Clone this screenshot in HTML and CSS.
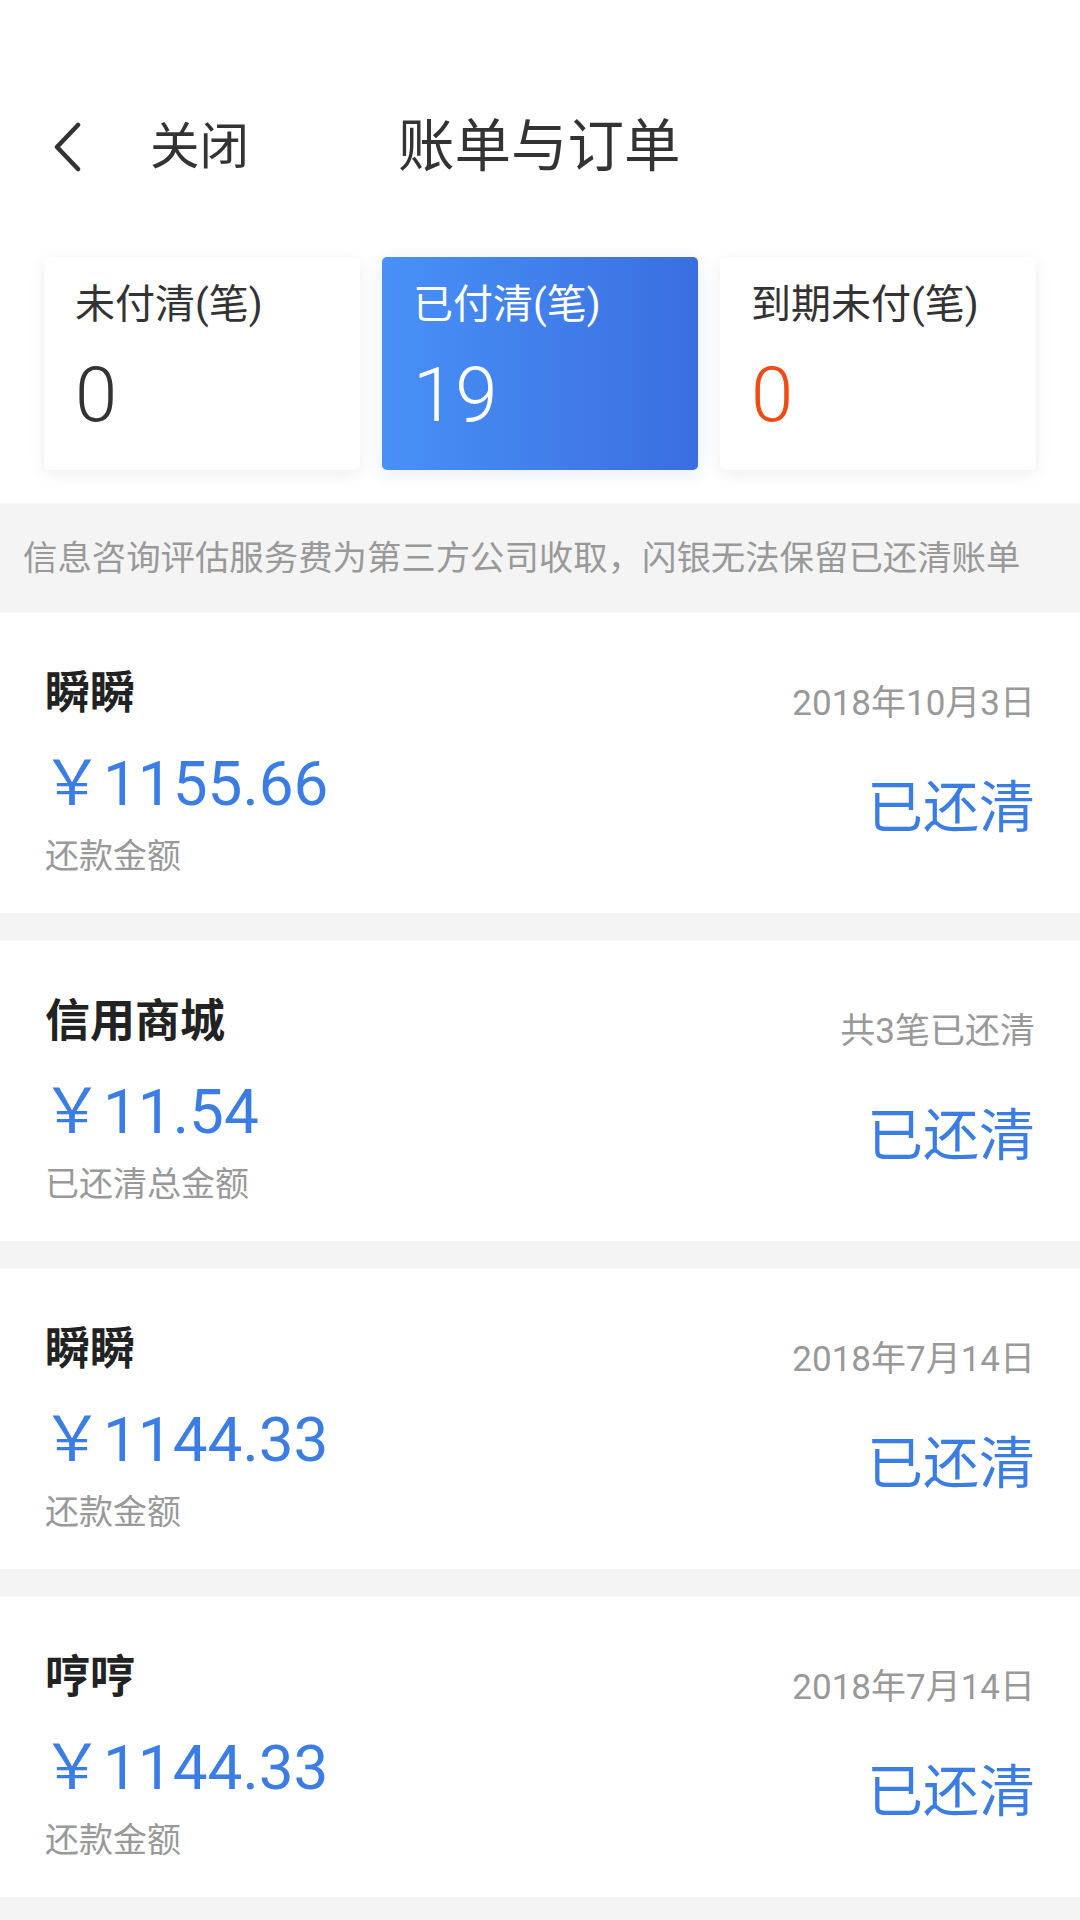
FILE: index.html
```html
<!DOCTYPE html>
<html lang="zh-CN">
<head>
<meta charset="UTF-8" />
<meta name="viewport" content="width=device-width, initial-scale=1" />
<title>账单与订单</title>
<link rel="stylesheet" href="styles.css">
</head>
<body>
<div class="top">
  <div class="nav">
    <svg class="back" width="28" height="50" viewBox="0 0 28 50">
      <polyline points="24,3 3,25 24,47" fill="none" stroke="#333" stroke-width="4.5" stroke-linecap="round" stroke-linejoin="round" />
    </svg>
    <span class="close">关闭</span>
    <span class="title">账单与订单</span>
  </div>

  <div class="stats">
    <div class="stat">
      <div class="stat-label">未付清(笔)</div>
      <div class="stat-num">0</div>
    </div>
    <div class="stat active">
      <div class="stat-label">已付清(笔)</div>
      <div class="stat-num">19</div>
    </div>
    <div class="stat">
      <div class="stat-label">到期未付(笔)</div>
      <div class="stat-num due">0</div>
    </div>
  </div>
</div>

<div class="notice">信息咨询评估服务费为第三方公司收取，闪银无法保留已还清账单</div>

<div class="bill">
  <div class="bill-left">
    <div class="bill-name">瞬瞬</div>
    <div class="bill-amount">￥1155.66</div>
    <div class="bill-sub">还款金额</div>
  </div>
  <div class="bill-right">
    <div class="bill-date">2018年10月3日</div>
    <div class="bill-status">已还清</div>
  </div>
</div>

<div class="bill">
  <div class="bill-left">
    <div class="bill-name">信用商城</div>
    <div class="bill-amount">￥11.54</div>
    <div class="bill-sub">已还清总金额</div>
  </div>
  <div class="bill-right">
    <div class="bill-date">共3笔已还清</div>
    <div class="bill-status">已还清</div>
  </div>
</div>

<div class="bill">
  <div class="bill-left">
    <div class="bill-name">瞬瞬</div>
    <div class="bill-amount">￥1144.33</div>
    <div class="bill-sub">还款金额</div>
  </div>
  <div class="bill-right">
    <div class="bill-date">2018年7月14日</div>
    <div class="bill-status">已还清</div>
  </div>
</div>

<div class="bill">
  <div class="bill-left">
    <div class="bill-name">哼哼</div>
    <div class="bill-amount">￥1144.33</div>
    <div class="bill-sub">还款金额</div>
  </div>
  <div class="bill-right">
    <div class="bill-date">2018年7月14日</div>
    <div class="bill-status">已还清</div>
  </div>
</div>
</body>
</html>
```

FILE: styles.css
```css
body {
  margin: 0;
  background: #f4f4f4;
  font-family: Roboto, "Noto Sans CJK SC", sans-serif;
  color: #333;
}
.top {
  background: #fff;
  padding: 97px 0 33px;
}
.nav {
  display: flex;
  align-items: center;
  height: 100px;
  padding-left: 54px;
}
.back {
  display: block;
}
.close {
  font-size: 49.5px;
  line-height: 60px;
  color: #333;
  margin-left: 68px;
}
.title {
  font-size: 56.5px;
  line-height: 64px;
  color: #333;
  margin-left: 149px;
}
.stats {
  display: flex;
  gap: 22px;
  padding: 0 44px;
  margin-top: 60px;
}
.stat {
  flex: 1;
  height: 213px;
  box-sizing: border-box;
  padding: 23px 0 0 31px;
  background: #fff;
  border-radius: 5px;
  box-shadow: 0 4px 18px rgba(0, 0, 0, 0.07);
}
.stat.active {
  background: linear-gradient(90deg, #4891f7, #3a6ee0);
  color: #fff;
  box-shadow: 0 4px 18px rgba(40, 80, 160, 0.12);
}
.stat-label {
  font-size: 40px;
  line-height: 50px;
}
.stat-num {
  font-size: 76px;
  line-height: 80px;
  font-weight: 300;
  margin-top: 25px;
}
.stat-num.due {
  color: #f04b14;
}
.notice {
  height: 110px;
  line-height: 110px;
  padding-left: 23px;
  font-size: 34.4px;
  color: #999;
  white-space: nowrap;
}
.bill {
  display: flex;
  justify-content: space-between;
  height: 300px;
  box-sizing: border-box;
  padding: 0 45px;
  background: #fff;
  margin-bottom: 28px;
}
.bill-name {
  font-size: 45px;
  font-weight: 700;
  line-height: 56px;
  color: #222;
  margin-top: 53px;
}
.bill-amount {
  font-size: 62px;
  line-height: 70px;
  color: #3b7de2;
  margin-top: 27px;
  margin-left: -4px;
}
.bill-sub {
  font-size: 34px;
  line-height: 44px;
  color: #999;
  margin-top: 15px;
}
.bill-right {
  display: flex;
  flex-direction: column;
  align-items: flex-end;
}
.bill-date {
  font-size: 35px;
  line-height: 44px;
  color: #999;
  margin-top: 69px;
}
.bill-status {
  font-size: 56px;
  line-height: 64px;
  color: #3b7de2;
  margin-top: 50px;
}
```
